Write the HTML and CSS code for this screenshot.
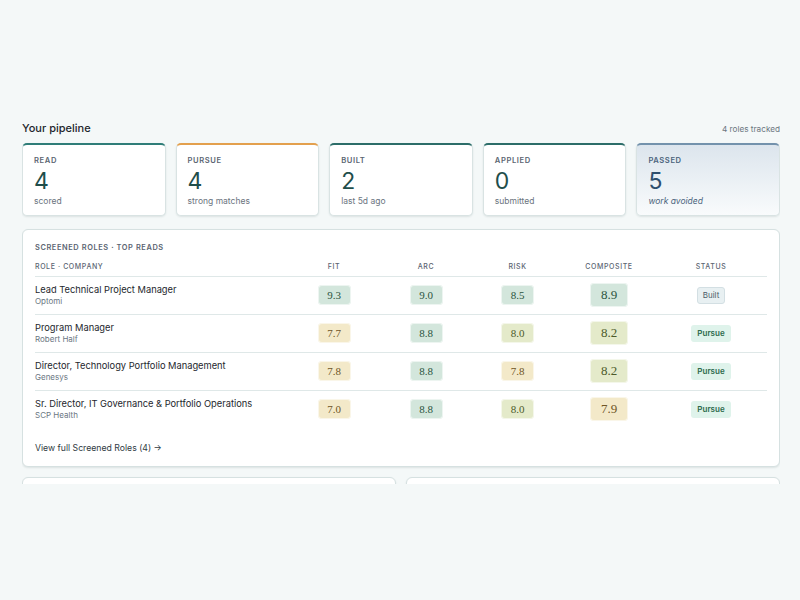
FILE: index.html
```html
<!DOCTYPE html>
<html lang="en">
<head>
  <meta charset="utf-8">
  <title>Pipeline</title>
  <link rel="stylesheet" href="styles.css">
</head>
<body>

<main class="page">
  <div class="section-head">
    <h2 class="section-title">Your pipeline</h2>
    <span class="section-meta">4 roles tracked</span>
  </div>

  <div class="stages">
    <div class="stage stage-read">
      <div class="stage-label">Read</div>
      <div class="stage-count">4</div>
      <div class="stage-sub">scored</div>
    </div>
    <div class="stage stage-pursue">
      <div class="stage-label">Pursue</div>
      <div class="stage-count">4</div>
      <div class="stage-sub">strong matches</div>
    </div>
    <div class="stage stage-built">
      <div class="stage-label">Built</div>
      <div class="stage-count">2</div>
      <div class="stage-sub">last 5d ago</div>
    </div>
    <div class="stage stage-applied">
      <div class="stage-label">Applied</div>
      <div class="stage-count">0</div>
      <div class="stage-sub">submitted</div>
    </div>
    <div class="stage stage-passed">
      <div class="stage-label">Passed</div>
      <div class="stage-count">5</div>
      <div class="stage-sub">work avoided</div>
    </div>
  </div>

  <section class="panel">
    <div class="panel-title">Screened roles &middot; top reads</div>

    <div class="roles">
      <div class="roles-row roles-head">
        <div class="col-role">Role &middot; Company</div>
        <div class="col-num">Fit</div>
        <div class="col-num">Arc</div>
        <div class="col-num">Risk</div>
        <div class="col-num">Composite</div>
        <div class="col-num">Status</div>
      </div>

      <div class="roles-row">
        <div class="col-role">
          <div class="role-name">Lead Technical Project Manager</div>
          <div class="role-company">Optomi</div>
        </div>
        <div class="col-num"><span class="score high">9.3</span></div>
        <div class="col-num"><span class="score high">9.0</span></div>
        <div class="col-num"><span class="score high">8.5</span></div>
        <div class="col-num"><span class="score big high">8.9</span></div>
        <div class="col-num"><span class="status status-built">Built</span></div>
      </div>

      <div class="roles-row">
        <div class="col-role">
          <div class="role-name">Program Manager</div>
          <div class="role-company">Robert Half</div>
        </div>
        <div class="col-num"><span class="score low">7.7</span></div>
        <div class="col-num"><span class="score high">8.8</span></div>
        <div class="col-num"><span class="score mid">8.0</span></div>
        <div class="col-num"><span class="score big mid">8.2</span></div>
        <div class="col-num"><span class="status status-pursue">Pursue</span></div>
      </div>

      <div class="roles-row">
        <div class="col-role">
          <div class="role-name">Director, Technology Portfolio Management</div>
          <div class="role-company">Genesys</div>
        </div>
        <div class="col-num"><span class="score low">7.8</span></div>
        <div class="col-num"><span class="score high">8.8</span></div>
        <div class="col-num"><span class="score low">7.8</span></div>
        <div class="col-num"><span class="score big mid">8.2</span></div>
        <div class="col-num"><span class="status status-pursue">Pursue</span></div>
      </div>

      <div class="roles-row">
        <div class="col-role">
          <div class="role-name">Sr. Director, IT Governance &amp; Portfolio Operations</div>
          <div class="role-company">SCP Health</div>
        </div>
        <div class="col-num"><span class="score low">7.0</span></div>
        <div class="col-num"><span class="score high">8.8</span></div>
        <div class="col-num"><span class="score mid">8.0</span></div>
        <div class="col-num"><span class="score big low">7.9</span></div>
        <div class="col-num"><span class="status status-pursue">Pursue</span></div>
      </div>
    </div>

    <a class="panel-link" href="#">View full Screened Roles (4) &rarr;</a>
  </section>

  <div class="split">
    <section class="panel panel-half"></section>
    <section class="panel panel-half"></section>
  </div>
</main>

</body>
</html>
```

FILE: styles.css
```css
html {
  height: 100%;
}
body {
  margin: 0;
  padding: 0;
  background: #f4f8f8;
  color: #1e272d;
  font-family: Inter, "Noto Sans", sans-serif;
  font-size: 11px;
  line-height: 1.3;
}

.page {
  margin: 121px 20px 0 22px;
  height: 363px;
  overflow: hidden;
}

.section-head {
  display: flex;
  justify-content: space-between;
  align-items: baseline;
  margin-bottom: 8px;
}
.section-title {
  margin: 0;
  font-size: 11px;
  font-weight: 500;
  color: #1d262c;
}
.section-meta {
  font-size: 8.2px;
  color: #6b7680;
}

/* pipeline stage cards */
.stages {
  display: grid;
  grid-template-columns: repeat(5, 1fr);
  gap: 10px;
  margin-bottom: 13px;
}
.stage {
  background: #fff;
  border: 1px solid #d9e3e3;
  border-top: 2px solid #2f7d78;
  border-radius: 5px;
  padding: 11px 11px 7px;
  height: 52px;
  box-shadow: 0 1px 2px rgba(40, 70, 70, 0.12);
}
.stage-label {
  font-size: 7.6px;
  font-weight: 600;
  letter-spacing: 0.6px;
  text-transform: uppercase;
  color: #5b6572;
}
.stage-count {
  font-size: 23px;
  line-height: 30px;
  color: #1f4e4b;
}
.stage-sub {
  font-size: 8.5px;
  color: #6b7480;
}
.stage-pursue {
  border-top-color: #e3a04e;
}
.stage-built,
.stage-applied {
  border-top-color: #2c6d69;
}
.stage-passed {
  border-top-color: #7392ac;
  background: linear-gradient(#dce5ed, #f9fbfc);
}
.stage-passed .stage-label {
  color: #4b647c;
}
.stage-passed .stage-count {
  color: #2e4f6e;
}
.stage-passed .stage-sub {
  font-style: italic;
  color: #4b647c;
}

/* panels */
.panel {
  background: #fff;
  border: 1px solid #d6e1e1;
  border-radius: 6px;
  padding: 13px 12px 12px;
  box-shadow: 0 1px 2px rgba(40, 70, 70, 0.12);
}
.panel-title {
  font-size: 7.4px;
  font-weight: 600;
  letter-spacing: 0.6px;
  text-transform: uppercase;
  color: #5b6572;
  margin-bottom: 9px;
}

.roles-row {
  display: grid;
  grid-template-columns: 253px 92px 92px 91px 92px 1fr;
  align-items: center;
  height: 37px;
  border-bottom: 1px solid #dfe8e8;
}
.roles-row:last-child {
  border-bottom: none;
}
.roles-head {
  height: 14px;
  align-items: start;
  font-size: 7px;
  font-weight: 500;
  letter-spacing: 0.6px;
  text-transform: uppercase;
  color: #5b6572;
}
.col-num {
  text-align: center;
}
.role-name {
  font-size: 9.3px;
  line-height: 12px;
  color: #1e272d;
}
.role-company {
  font-size: 8px;
  line-height: 11px;
  color: #6a7682;
}

/* score pills */
.score {
  display: inline-block;
  width: 33px;
  height: 20px;
  line-height: 20px;
  border-radius: 4px;
  font-family: "Liberation Serif", "DejaVu Serif", serif;
  font-size: 11px;
  text-align: center;
  box-shadow: inset 0 0 0 1px rgba(255, 255, 255, 0.6);
}
.score.big {
  width: 38px;
  height: 24px;
  line-height: 24px;
  font-size: 13px;
}
.score.high {
  background: #d3e6dc;
  color: #2b5440;
}
.score.mid {
  background: #e4eaca;
  color: #4c5a2a;
}
.score.low {
  background: #f3e9c9;
  color: #6e5526;
}

.status {
  display: inline-block;
  font-size: 8px;
  padding: 2px 5px;
  border-radius: 3px;
}
.status-built {
  background: #e8f0f2;
  border: 1px solid #d3dfe3;
  color: #4b5c68;
}
.status-pursue {
  background: #dff3eb;
  color: #2c6a4b;
  font-weight: 600;
  padding: 3px 6px;
}

.panel-link {
  display: inline-block;
  margin-top: 15px;
  font-size: 8.7px;
  color: #2f3a42;
  text-decoration: none;
}
.panel-link:hover {
  text-decoration: underline;
}

.split {
  display: grid;
  grid-template-columns: 1fr 1fr;
  gap: 10px;
  margin-top: 10px;
}
.panel-half {
  height: 120px;
  box-sizing: border-box;
}
```
